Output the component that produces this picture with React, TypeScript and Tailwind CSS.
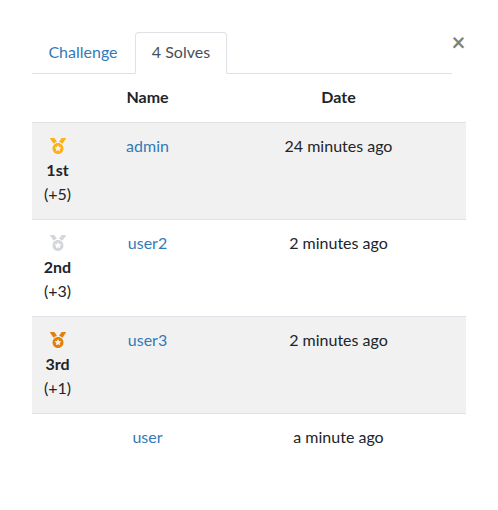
const rows = [
  { medal: "text-[#fcb116]", place: "1st", bonus: "(+5)", name: "admin", date: "24 minutes ago" },
  { medal: "text-[#d3d7db]", place: "2nd", bonus: "(+3)", name: "user2", date: "2 minutes ago" },
  { medal: "text-[#e47f09]", place: "3rd", bonus: "(+1)", name: "user3", date: "2 minutes ago" },
  { name: "user", date: "a minute ago" },
];

function Medal({ className }: { className: string }) {
  return (
    <svg viewBox="0 0 512 512" className={"h-4 w-4 " + className} fill="currentColor">
      <path d="M223.75 130.75L154.62 15.54A31.997 31.997 0 0 0 127.18 0H16.03C3.08 0-4.5 14.57 2.92 25.18l111.27 158.96c29.72-27.77 67.52-46.83 109.56-53.39zM495.97 0H384.82c-11.24 0-21.66 5.9-27.44 15.54l-69.13 115.21c42.04 6.56 79.84 25.62 109.56 53.38L509.08 25.18C516.5 14.57 508.92 0 495.97 0zM256 160c-97.2 0-176 78.8-176 176s78.8 176 176 176 176-78.8 176-176-78.8-176-176-176zm92.52 157.26l-37.93 36.96 8.97 52.22c1.6 9.36-8.26 16.51-16.65 12.09L256 393.88l-46.9 24.65c-8.4 4.45-18.25-2.74-16.65-12.09l8.97-52.22-37.93-36.96c-6.82-6.64-3.05-18.23 6.35-19.59l52.43-7.64 23.43-47.52c2.11-4.28 6.19-6.39 10.28-6.39 4.11 0 8.22 2.14 10.33 6.39l23.43 47.52 52.43 7.64c9.4 1.36 13.17 12.95 6.35 19.59z" />
    </svg>
  );
}

export default function App() {
  return (
    <div className="h-[510px] w-[498px] bg-white px-8 pt-8 font-['Lato',sans-serif] text-base leading-6 text-[#212529] antialiased">
      <div className="flex">
        <div className="flex h-[42px] w-[420px] border-b border-[#dee2e6]">
          <button className="h-[42px] w-[103px] border border-transparent pb-0.5 pr-px text-[#337ab7]">Challenge</button>
          <button className="h-[42px] w-[92px] rounded-t border border-[#dee2e6] border-b-white bg-white pb-0.5 text-[#495057]">4 Solves</button>
        </div>
        <button aria-label="Close" className="-mt-0.5 -ml-[0.5px] h-6 text-2xl font-bold leading-6 text-black opacity-50">×</button>
      </div>
      <div className="w-[434px]">
        <div className="grid h-12 grid-cols-[51px_129px_254px] pt-[11px] text-center font-bold">
          <span />
          <span>Name</span>
          <span className="pr-px">Date</span>
        </div>
        {rows.map((r, i) => (
          <div key={r.name} className={"grid h-[97px] grid-cols-[51px_129px_254px] border-t border-[#dee2e6] pt-[11px] text-center " + (i % 2 === 0 ? "bg-[#f1f1f1]" : "bg-white")}>
            <div>
              {r.medal && (
                <>
                  <div className="flex h-6 items-center justify-center"><Medal className={r.medal} /></div>
                  <div className="font-bold">{r.place}</div>
                  <div>{r.bonus}</div>
                </>
              )}
            </div>
            <a className="text-[#337ab7]">{r.name}</a>
            <span className="pr-px">{r.date}</span>
          </div>
        ))}
      </div>
    </div>
  );
}
